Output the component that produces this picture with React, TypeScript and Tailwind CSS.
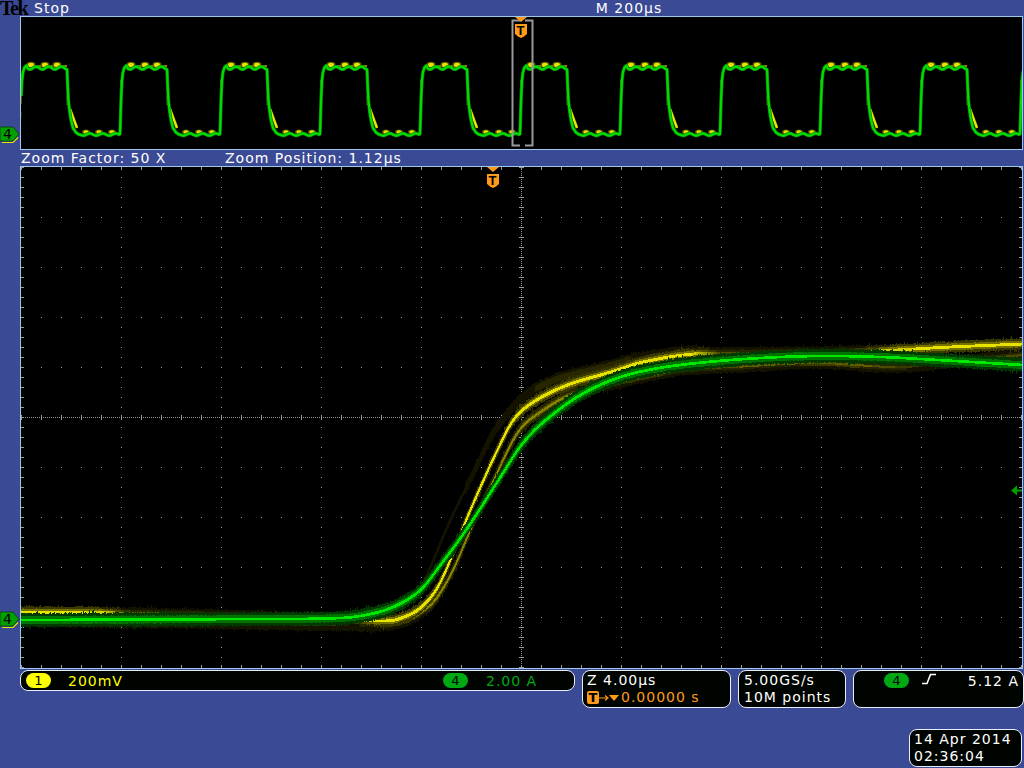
import type { ReactNode } from "react";

/* ================= HELPERS ================= */

type Pt = [number, number];

function mulberry(seed: number) {
  let a = seed;
  return () => {
    a = (a + 0x6d2b79f5) | 0;
    let t = Math.imul(a ^ (a >>> 15), 1 | a);
    t = (t + Math.imul(t ^ (t >>> 7), 61 | t)) ^ t;
    return ((t ^ (t >>> 14)) >>> 0) / 4294967296;
  };
}

// cubic hermite through the points, x must be increasing
function curve(pts: Pt[], x: number) {
  if (x <= pts[0][0]) return pts[0][1];
  const last = pts.length - 1;
  if (x >= pts[last][0]) return pts[last][1];
  let i = 0;
  while (pts[i + 1][0] < x) i++;
  const slope = (k: number) => {
    const a = pts[Math.max(k - 1, 0)];
    const b = pts[Math.min(k + 1, last)];
    return (b[1] - a[1]) / (b[0] - a[0]);
  };
  const w = pts[i + 1][0] - pts[i][0];
  const t = (x - pts[i][0]) / w;
  const t2 = t * t;
  const t3 = t2 * t;
  return (
    (2 * t3 - 3 * t2 + 1) * pts[i][1] +
    (t3 - 2 * t2 + t) * w * slope(i) +
    (-2 * t3 + 3 * t2) * pts[i + 1][1] +
    (t3 - t2) * w * slope(i + 1)
  );
}

function mix(rgb: number[], k: number) {
  const s = Math.round(k * 12) / 12;
  return `rgb(${rgb.map((c) => Math.round(c * s)).join(",")})`;
}

/* ================= MAIN WAVEFORMS ================= */

type Trace = {
  pts: Pt[];
  from: number;
  to: number;
  rgb: number[];
  level: (x: number) => number;
  outer: number;
  mid: number;
  core: number;
  seed: number;
};

const YELLOW = [232, 226, 0];
const GREEN = [0, 232, 0];

const ramp = (stops: Pt[]) => (x: number) => {
  if (x <= stops[0][0]) return stops[0][1];
  for (let i = 0; i < stops.length - 1; i++) {
    if (x <= stops[i + 1][0]) {
      const t = (x - stops[i][0]) / (stops[i + 1][0] - stops[i][0]);
      return stops[i][1] + t * (stops[i + 1][1] - stops[i][1]);
    }
  }
  return stops[stops.length - 1][1];
};

const TRACES: Trace[] = [
  {
    // faint outer edge of the yellow persistence
    pts: [[415, 600], [430, 567], [450, 520], [473, 473], [493, 433], [513, 407], [533, 390], [560, 378], [600, 368], [640, 358], [700, 351], [1022, 351]],
    from: 412,
    to: 700,
    rgb: YELLOW,
    level: ramp([[412, 0.16], [520, 0.22], [560, 0.3], [700, 0.2]]),
    outer: 5,
    mid: 3,
    core: 0,
    seed: 11,
  },
  {
    pts: [[21, 621], [200, 623], [350, 625], [398, 623], [430, 605], [450, 575], [473, 523], [490, 487], [517, 433], [540, 412], [570, 395], [620, 382], [680, 370], [733, 367], [817, 363], [900, 367], [960, 361], [1022, 355]],
    from: 21,
    to: 1022,
    rgb: YELLOW,
    level: ramp([[21, 0.2], [380, 0.25], [430, 0.6], [560, 0.6], [700, 0.35], [850, 0.45], [920, 0.2], [1022, 0.35]]),
    outer: 5,
    mid: 2.5,
    core: 1,
    seed: 23,
  },
  {
    pts: [[21, 612], [120, 613], [240, 616], [340, 620], [380, 621], [398, 619], [421, 607], [440, 582], [467, 517], [480, 487], [497, 450], [513, 420], [533, 402], [567, 385], [607, 373], [643, 362], [693, 354], [760, 353], [873, 351], [950, 347], [1022, 344]],
    from: 21,
    to: 1022,
    rgb: YELLOW,
    level: ramp([[21, 1], [100, 0.95], [130, 0.4], [350, 0.3], [375, 1], [690, 1], [720, 0.3], [850, 0.35], [890, 0.95], [1022, 1]]),
    outer: 5,
    mid: 3,
    core: 1.4,
    seed: 37,
  },
  {
    pts: [[21, 620], [250, 619], [340, 618], [370, 614], [395, 606], [420, 590], [440, 565], [467, 528], [500, 477], [521, 445], [543, 422], [580, 395], [617, 378], [653, 369], [697, 363], [760, 358], [820, 356], [880, 357], [920, 359], [1022, 365]],
    from: 21,
    to: 1022,
    rgb: GREEN,
    level: () => 1,
    outer: 6,
    mid: 3.6,
    core: 1.3,
    seed: 51,
  },
];

function traceLayers(tr: Trace) {
  const rand = mulberry(tr.seed);
  const layers: Record<string, string>[] = [{}, {}, {}];
  const push = (n: number, color: string, x: number, y1: number, y2: number) => {
    const a = Math.round(y1);
    const b = Math.max(Math.round(y2), a + 1);
    layers[n][color] = (layers[n][color] || "") + `M${x} ${a}V${b}`;
  };
  for (let x = tr.from; x <= tr.to; x++) {
    const y = curve(tr.pts, x);
    const lv = tr.level(x);
    const grow = Math.abs(curve(tr.pts, x + 1) - y) / 2;
    const up = tr.outer + rand() * 1.6 + (rand() < 0.12 ? rand() * 2.5 : 0);
    const down = tr.outer + rand() * 1.6 + (rand() < 0.12 ? rand() * 2.5 : 0);
    push(0, mix(tr.rgb, lv * 0.22), x, y - up, y + down);
    push(1, mix(tr.rgb, lv * 0.5), x, y - tr.mid - rand() * 0.7, y + tr.mid + rand() * 0.7);
    if (tr.core > 0) {
      const c = tr.core + grow;
      push(2, mix(tr.rgb, lv), x, y - c, y + c);
    }
  }
  return layers;
}

function MainTraces() {
  return (
    <g shapeRendering="crispEdges" fill="none" strokeWidth={1}>
      {TRACES.map((tr, t) =>
        traceLayers(tr).map((layer, l) =>
          Object.entries(layer).map(([color, d]) => (
            <path key={`${t}-${l}-${color}`} d={d} stroke={color} />
          ))
        )
      )}
    </g>
  );
}

/* ================= GRATICULE ================= */

function dot(x: number, y: number, w = 1, h = 1) {
  return `M${x} ${y}h${w}v${h}h${-w}z`;
}

function graticule() {
  let d = "";
  const left = 21;
  const top = 167;
  for (let col = 0; col <= 10; col++) {
    for (let y = top; y <= 667; y += 10) d += dot(left + col * 100, y);
  }
  for (let row = 0; row <= 10; row++) {
    for (let x = left; x <= 1021; x += 20) d += dot(x, top + row * 50);
  }
  // center cross
  for (let x = left; x <= 1021; x += 2) d += dot(x, 417);
  for (let y = top; y <= 667; y += 2) d += dot(521, y);
  for (let x = left; x <= 1021; x += 20) d += dot(x, 415, 1, 5);
  for (let y = top; y <= 667; y += 10) d += dot(519, y, 5, 1);
  // edge ticks
  for (let x = left; x <= 1021; x += 20) {
    d += dot(x, 167, 1, 3);
    d += dot(x, 665, 1, 3);
  }
  for (let y = top; y <= 667; y += 10) {
    d += dot(21, y, 3, 1);
    d += dot(1019, y, 3, 1);
  }
  return d;
}

/* ================= OVERVIEW WAVEFORM ================= */

function overviewGreen() {
  let d = "";
  for (let x0 = 20; x0 < 1022; x0 += 100) {
    const seg: Pt[] = [[0, 134], [0.6, 116], [1.2, 96], [2, 80], [3, 72], [4.5, 67.5], [6.5, 65.5]];
    for (let t = 8; t <= 47; t += 1) {
      seg.push([t, 68 + 1.4 * Math.sin(((t - 10) / 12.5) * Math.PI * 2 + 1.6)]);
    }
    seg.push([47.6, 84], [48.4, 100], [49.5, 110], [51, 120], [53, 128], [56, 132.5], [59, 134.5]);
    for (let t = 60; t < 100; t += 1) {
      seg.push([t, 134.5 + 1.1 * Math.sin(((t - 60) / 13) * Math.PI * 2)]);
    }
    d +=
      (x0 === 20 ? "M" : "L") +
      seg
        .filter(([t]) => x0 + t >= 21)
        .map(([t, y]) => `${(x0 + t).toFixed(1)} ${y.toFixed(1)}`)
        .join("L");
  }
  return d;
}

function overviewYellow() {
  const items: ReactNode[] = [];
  for (let x0 = 20; x0 < 1022; x0 += 100) {
    items.push(
      <g key={x0}>
        <path d={`M${x0 + 8} 66H${x0 + 47}`} stroke="#b8b400" strokeWidth={1.6} fill="none" />
        <path d={`M${x0 + 50} 109L${x0 + 57} 128`} stroke="#e8e200" strokeWidth={2.6} fill="none" />
        <path d={`M${x0 + 47.5} 82V108`} stroke="#c8c400" strokeWidth={1.5} fill="none" strokeDasharray="9 5" />
        <path d={`M${x0 + 1} 80L${x0 + 0.4} 118`} stroke="#b8b400" strokeWidth={1.5} fill="none" strokeDasharray="8 8" />
        {[11, 25, 37].map((t) => (
          <g key={t}>
            <ellipse cx={x0 + t} cy={65} rx={4.5} ry={3.2} fill="#5c5a00" />
            <ellipse cx={x0 + t} cy={65} rx={3} ry={2.2} fill="#e8e200" />
          </g>
        ))}
        {[66, 79, 92].map((t) => (
          <g key={t}>
            <ellipse cx={x0 + t} cy={132} rx={4} ry={2.6} fill="#5c5a00" />
            <ellipse cx={x0 + t} cy={132} rx={2.6} ry={1.8} fill="#e8e200" />
          </g>
        ))}
      </g>
    );
  }
  return items;
}

/* ================= SMALL PARTS ================= */

function TriggerMark({ x, y }: { x: number; y: number }) {
  return (
    <g>
      <path d={`M${x - 6} ${y}h12l-6 5z`} fill="#ff9a1a" />
      <path
        d={`M${x - 6} ${y + 7}h12v10l-3 2.5l-3 1.5l-3-1.5l-3-2.5z`}
        fill="#ff9a1a"
      />
      <text
        x={x}
        y={y + 18}
        textAnchor="middle"
        fontSize={13}
        fontWeight={700}
        fontFamily="'Liberation Sans', sans-serif"
        fill="#000"
      >
        T
      </text>
    </g>
  );
}

function GroundMark({ className }: { className: string }) {
  return (
    <svg viewBox="0 0 20 19" className={`absolute left-0 w-5 h-[19px] ${className}`}>
      <path d="M2 17.5h11l5-5" stroke="#e8e200" strokeWidth={1.2} fill="none" />
      <path d="M0 2h13l6 7l-6 7H0z" fill="#00a000" stroke="#0b3b0b" strokeWidth={0.8} />
      <text
        x={8}
        y={14}
        textAnchor="middle"
        fontSize={14}
        fontFamily="'DejaVu Sans', sans-serif"
        fill="#000"
      >
        4
      </text>
    </svg>
  );
}

function Badge({ n, tone }: { n: string; tone: string }) {
  return (
    <span
      className={`flex h-[15px] w-[25px] items-center justify-center rounded-full text-[13px] tracking-normal text-black ${tone}`}
    >
      {n}
    </span>
  );
}

/* ================= PAGE ================= */

export default function App() {
  const grid = graticule();

  return (
    <div className="flex h-[768px] w-[1024px] flex-col overflow-hidden bg-[#3b4a94] font-['DejaVu_Sans',sans-serif] text-[14px] leading-4 tracking-[1px] text-white">
      {/* ================= HEADER ================= */}
      <div className="relative flex h-4 items-center">
        <span className="w-[34px] font-['Liberation_Serif',serif] text-[20px] font-bold leading-4 tracking-[-1.5px] text-black">
          Tek
        </span>
        <span>Stop</span>
        <span className="ml-[526px]">M 200µs</span>
      </div>

      {/* ================= OVERVIEW ================= */}
      <div className="flex h-[134px]">
        <div className="relative w-5 shrink-0">
          <GroundMark className="top-[109px]" />
        </div>
        <div className="h-full w-[1003px] border border-[#9cc8f0] bg-black">
          <svg viewBox="21 17 1001 132" className="block h-full w-full">
            {overviewYellow()}
            <path d={overviewGreen()} fill="none" stroke="#0a8a0a" strokeWidth={3.4} strokeLinejoin="round" />
            <path d={overviewGreen()} fill="none" stroke="#00e000" strokeWidth={2} strokeLinejoin="round" />
            <path
              d="M520 20.5H512.5V145.5H520M525 145.5H532.5V20.5H525"
              fill="none"
              stroke="#9a9a9a"
              strokeWidth={2}
            />
            <TriggerMark x={521} y={17} />
          </svg>
        </div>
      </div>

      {/* ================= ZOOM INFO ================= */}
      <div className="flex h-4 items-center pl-[21px]">
        <span className="w-[204px]">Zoom Factor: 50 X</span>
        <span>Zoom Position: 1.12µs</span>
      </div>

      {/* ================= MAIN SCREEN ================= */}
      <div className="flex h-[503px]">
        <div className="relative w-5 shrink-0">
          <GroundMark className="top-[444px]" />
        </div>
        <div className="h-full w-[1003px] border border-[#9cc8f0] bg-black">
          <svg viewBox="21 167 1001 501" className="block h-full w-full">
            <path d={grid} fill="#9c9c8e" shapeRendering="crispEdges" />
            <MainTraces />
            <TriggerMark x={493} y={167} />
            <path d="M1011 490.5l6-5v4h5v2h-5v4z" fill="#00a000" />
          </svg>
        </div>
      </div>

      {/* ================= STATUS ================= */}
      <div className="mt-px flex items-start gap-[7px] pl-5">
        <div className="flex h-[21px] w-[555px] items-center rounded-lg border border-[#e8eef8] bg-[#000400] pl-[5px]">
          <Badge n="1" tone="bg-[#ffff00]" />
          <span className="ml-[17px] w-[375px] text-[#ffff00]">200mV</span>
          <Badge n="4" tone="bg-[#00a814]" />
          <span className="ml-[18px] text-[#00a814]">2.00 A</span>
        </div>

        <div className="h-[38px] w-[149px] rounded-lg border border-[#e8eef8] bg-[#000400] pl-1 pt-px leading-[17px]">
          <div>Z 4.00µs</div>
          <div className="flex items-center text-[#ff9a1a]">
            <span className="flex h-[13px] w-3 items-center justify-center rounded-[2px] bg-[#ff9a1a] text-[13px] font-bold tracking-normal text-black">
              T
            </span>
            <svg viewBox="0 0 20 10" className="h-2.5 w-5 shrink-0">
              <path d="M0 5h8M6 2.5l3 2.5l-3 2.5" fill="none" stroke="#ff9a1a" strokeWidth={1.2} />
              <path d="M10 2h10l-5 6z" fill="#ff9a1a" />
            </svg>
            <span className="ml-[2px]">0.00000 s</span>
          </div>
        </div>

        <div className="h-[38px] w-[108px] rounded-lg border border-[#e8eef8] bg-[#000400] pl-[5px] pt-px leading-[17px]">
          <div>5.00GS/s</div>
          <div>10M points</div>
        </div>

        <div className="flex h-[38px] w-[171px] items-start rounded-lg border border-[#e8eef8] bg-[#000400] pl-[30px] pr-[4px] pt-[2px]">
          <Badge n="4" tone="bg-[#00a814]" />
          <svg viewBox="0 0 14 12" className="ml-[13px] h-3 w-[14px] shrink-0">
            <path d="M0 10.5h5L8.5 1.5H14" fill="none" stroke="#fff" strokeWidth={1.6} />
          </svg>
          <span className="ml-auto">5.12 A</span>
        </div>
      </div>

      {/* ================= CLOCK ================= */}
      <div className="mt-[21px] flex justify-end pr-[2px]">
        <div className="h-[38px] w-[113px] rounded-lg border border-[#e8eef8] bg-[#000400] pl-1 pt-px leading-[17px]">
          <div className="whitespace-pre">14 Apr 2014</div>
          <div>02:36:04</div>
        </div>
      </div>
    </div>
  );
}
